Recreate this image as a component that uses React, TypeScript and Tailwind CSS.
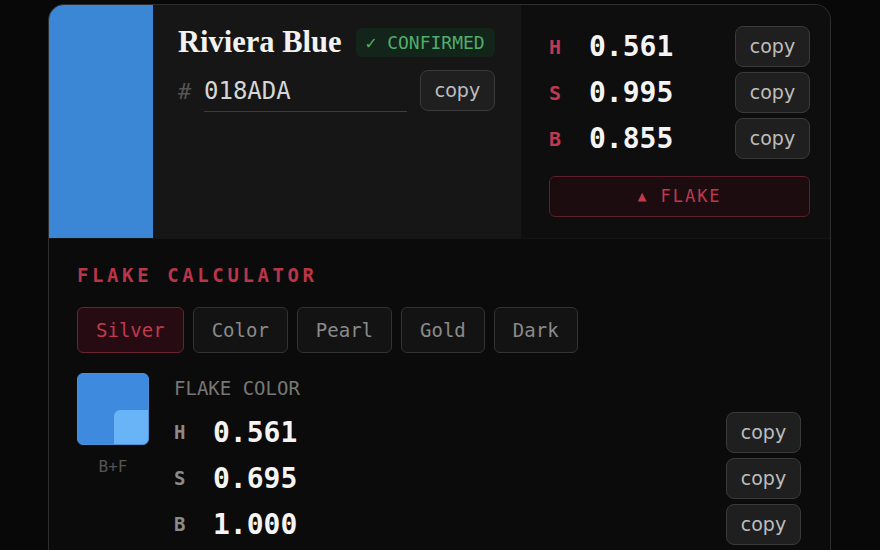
const mono = { fontFamily: '"DejaVu Sans Mono", monospace' }

function CopyButton({ className = '' }: { className?: string }) {
  return (
    <button
      type="button"
      className={`flex h-[41px] w-[75px] items-center justify-center rounded-lg border border-[#3a3a3a] bg-[#1f1f1f] text-[19px] text-[#bdbdbd] ${className}`}
      style={{ fontFamily: '"DejaVu Sans", sans-serif' }}
    >
      copy
    </button>
  )
}

const hsb = [
  { k: 'H', v: '0.561' },
  { k: 'S', v: '0.995' },
  { k: 'B', v: '0.855' },
]

const flake = [
  { k: 'H', v: '0.561' },
  { k: 'S', v: '0.695' },
  { k: 'B', v: '1.000' },
]

const tabs = ['Silver', 'Color', 'Pearl', 'Gold', 'Dark']

export default function App() {
  return (
    <div className="h-screen overflow-hidden bg-[#080808] pl-[48px] pt-[4px]">
      <div className="w-[783px] overflow-hidden rounded-t-2xl border border-b-0 border-[#2e2e2e] bg-[#0b0b0b] pb-10">
        {/* top: swatch + name + hsb */}
        <div className="flex h-[233px]">
          <div className="w-[104px] bg-[#3b87d6]" />
          <div className="w-[368px] bg-[#161616] pl-[25px] pt-[22px]">
            <div className="flex h-[31px] items-center gap-[14px]">
              <h1
                className="text-[30.5px] font-bold leading-none text-[#f2f2f2]"
                style={{ fontFamily: '"Liberation Serif", serif' }}
              >
                Riviera Blue
              </h1>
              <span
                className="flex h-[29px] items-center rounded-md bg-[#13241a] px-[10px] text-[18px] text-[#4fae6c]"
                style={mono}
              >
                ✓ CONFIRMED
              </span>
            </div>
            <div className="mt-[12px] flex items-start">
              <span className="flex h-[42px] w-[26px] items-center text-[22px] text-[#555]" style={mono}>
                #
              </span>
              <div
                className="flex h-[42px] w-[203px] items-center border-b border-[#3c3c3c] text-[24px] text-[#d6d6d6]"
                style={mono}
              >
                018ADA
              </div>
              <CopyButton className="ml-[13px]" />
            </div>
          </div>
          <div className="flex-1 bg-[#0e0e0e] pl-[28px] pr-[20px] pt-[21px]">
            <div className="flex flex-col gap-[5px]">
              {hsb.map((r) => (
                <div key={r.k} className="flex h-[41px] items-center" style={mono}>
                  <span className="w-[40px] text-[20px] font-bold text-[#c0394f]">{r.k}</span>
                  <span className="flex-1 text-[28px] font-bold text-[#f4f4f4]">{r.v}</span>
                  <CopyButton />
                </div>
              ))}
            </div>
            <button
              type="button"
              className="mt-[17px] flex h-[41px] w-full items-center justify-center gap-[12px] rounded-md border border-[#5c1f2b] bg-[#1c0b0f] text-[17px] tracking-[2px] text-[#c0394f]"
              style={mono}
            >
              <span className="text-[15px]">▲</span>
              <span>FLAKE</span>
            </button>
          </div>
        </div>

        {/* flake calculator */}
        <div className="border-t border-[#141414] pl-[28px] pr-[29px] pt-[23px]">
          <h2 className="text-[19px] font-bold leading-[26px] tracking-[3.6px] text-[#b8354a]" style={mono}>
            FLAKE CALCULATOR
          </h2>
          <div className="mt-[19px] flex gap-[9px]" style={mono}>
            {tabs.map((t, i) => (
              <button
                key={t}
                type="button"
                className={
                  i === 0
                    ? 'h-[46px] rounded-md border border-[#6b2233] bg-[#260c12] px-[18px] text-[19px] text-[#c0394f]'
                    : 'h-[46px] rounded-md border border-[#333] bg-[#131313] px-[18px] text-[19px] text-[#8a8a8a]'
                }
              >
                {t}
              </button>
            ))}
          </div>

          <div className="mt-[20px] flex">
            <div className="flex w-[72px] flex-col items-center">
              <div className="relative h-[72px] w-[72px] overflow-hidden rounded-md border border-[#4a8fd8] bg-[#3d8ade]">
                <div className="absolute bottom-0 right-0 h-[34px] w-[34px] rounded-tl-md bg-[#69b4f7]" />
              </div>
              <span className="mt-[10px] text-[16px] text-[#555]" style={mono}>
                B+F
              </span>
            </div>
            <div className="ml-[25px] flex-1" style={mono}>
              <div className="text-[19px] leading-[30px] text-[#777]">FLAKE COLOR</div>
              <div className="mt-[9px] flex flex-col gap-[5px]">
                {flake.map((r) => (
                  <div key={r.k} className="flex h-[41px] items-center">
                    <span className="w-[39px] text-[19px] font-bold text-[#8a8a8a]">{r.k}</span>
                    <span className="flex-1 text-[28px] font-bold text-[#f4f4f4]">{r.v}</span>
                    <CopyButton />
                  </div>
                ))}
              </div>
            </div>
          </div>
        </div>
      </div>
    </div>
  )
}
